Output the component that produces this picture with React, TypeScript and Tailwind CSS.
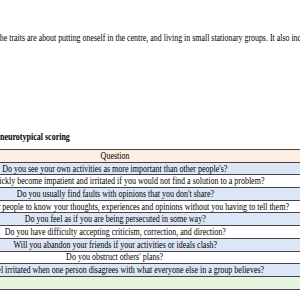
import React from "react";

const rows: string[] = [
  "Do you see your own activities as more important than other people's?",
  "Do you quickly become impatient and irritated if you would not find a solution to a problem?",
  "Do you usually find faults with opinions that you don't share?",
  "Do you want other people to know your thoughts, experiences and opinions without you having to tell them?",
  "Do you feel as if you are being persecuted in some way?",
  "Do you have difficulty accepting criticism, correction, and direction?",
  "Will you abandon your friends if your activities or ideals clash?",
  "Do you obstruct others' plans?",
  "Do you feel irritated when one person disagrees with what everyone else in a group believes?",
];

export default function App() {
  return (
    <div className="w-[300px] h-[300px] overflow-hidden bg-white text-black font-['Liberation_Serif','Times_New_Roman',serif]">
      <div className="h-[32px]" />
      <div className="whitespace-nowrap text-[10px] leading-[12px] ml-[-5px]">
        <span className="inline-block origin-left scale-x-[0.79]">
          The traits are about putting oneself in the centre, and living in small stationary groups. It also includes
        </span>
      </div>
      <div className="h-[87px]" />
      <div className="whitespace-nowrap text-[10px] leading-[12px] font-bold">
        <span className="inline-block origin-left scale-x-[0.8]">neurotypical scoring</span>
      </div>
      <div className="h-[6px]" />
      <div className="w-[600px] ml-[-185px] text-[10px] leading-none border-t border-[#444]">
        <div className="h-[12.7px] bg-[#fdeee2] border-b border-[#444] flex items-center justify-center whitespace-nowrap">
          <span className="inline-block scale-x-[0.8]">Question</span>
        </div>
        {rows.map((q, i) => (
          <div
            key={i}
            className={
              "h-[12.7px] border-b border-[#444] flex items-center justify-center whitespace-nowrap " +
              (i % 2 === 0 ? "bg-[#dde6f6]" : "bg-white")
            }
          >
            <span className="inline-block scale-x-[0.8]">{q}</span>
          </div>
        ))}
        <div className="h-[12.7px] bg-[#e6f5dd] border-b border-[#444]" />
      </div>
    </div>
  );
}
